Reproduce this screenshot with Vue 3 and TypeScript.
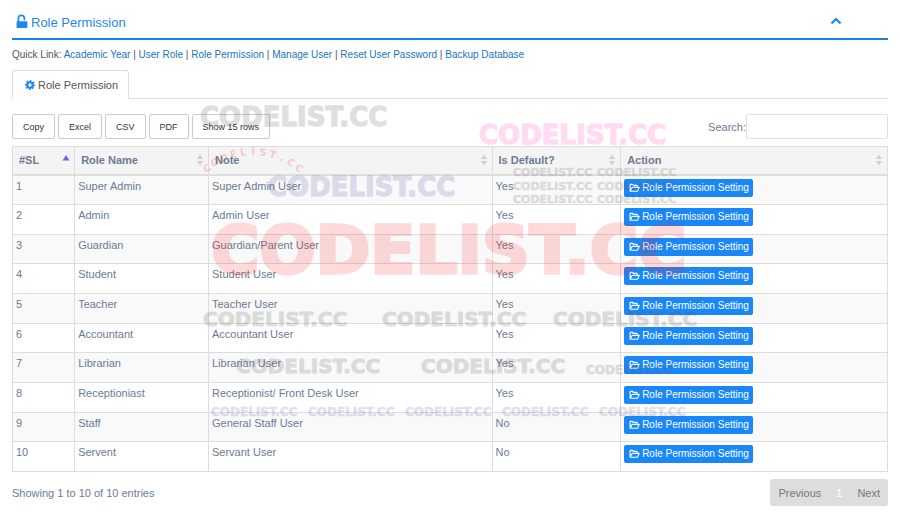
<script setup lang="ts">
import { ref } from 'vue'

interface Role {
  name: string
  note: string
  isDefault: boolean
}

interface Mark {
  x: number
  y: number
  size: number
  tone: string
}

const quickLinks: string[] = [
  'Academic Year',
  'User Role',
  'Role Permission',
  'Manage User',
  'Reset User Password',
  'Backup Database',
]

const exportButtons: string[] = ['Copy', 'Excel', 'CSV', 'PDF', 'Show 15 rows']

const columns: string[] = ['#SL', 'Role Name', 'Note', 'Is Default?', 'Action']

const roles: Role[] = [
  { name: 'Super Admin', note: 'Super Admin User', isDefault: true },
  { name: 'Admin', note: 'Admin User', isDefault: true },
  { name: 'Guardian', note: 'Guardian/Parent User', isDefault: true },
  { name: 'Student', note: 'Student User', isDefault: true },
  { name: 'Teacher', note: 'Teacher User', isDefault: true },
  { name: 'Accountant', note: 'Accountant User', isDefault: true },
  { name: 'Librarian', note: 'Librarian User', isDefault: true },
  { name: 'Receptioniast', note: 'Receptionist/ Front Desk User', isDefault: true },
  { name: 'Staff', note: 'General Staff User', isDefault: false },
  { name: 'Servent', note: 'Servant User', isDefault: false },
]

const search = ref('')

const brand = 'CODELIST.CC'

const marks: Mark[] = [
  { x: 200, y: 126, size: 26, tone: 'grey' },
  { x: 479, y: 144, size: 26, tone: 'pink' },
  { x: 268, y: 196, size: 26, tone: 'violet' },
  { x: 211, y: 273, size: 66, tone: 'red' },
  { x: 203, y: 326, size: 20, tone: 'grey' },
  { x: 382, y: 326, size: 20, tone: 'grey' },
  { x: 553, y: 326, size: 20, tone: 'grey' },
  { x: 236, y: 373, size: 20, tone: 'grey' },
  { x: 421, y: 373, size: 20, tone: 'grey' },
  { x: 586, y: 374, size: 12, tone: 'grey' },
  { x: 211, y: 416, size: 12, tone: 'violet' },
  { x: 308, y: 416, size: 12, tone: 'violet' },
  { x: 405, y: 416, size: 12, tone: 'violet' },
  { x: 502, y: 416, size: 12, tone: 'violet' },
  { x: 599, y: 416, size: 12, tone: 'violet' },
  { x: 513, y: 176, size: 11, tone: 'grey' },
  { x: 597, y: 176, size: 11, tone: 'grey' },
  { x: 513, y: 190, size: 11, tone: 'grey' },
  { x: 597, y: 190, size: 11, tone: 'grey' },
  { x: 513, y: 203, size: 11, tone: 'grey' },
  { x: 597, y: 203, size: 11, tone: 'grey' },
]

// Letters of the curved mark, fanned out around a common centre.
const arc = brand.split('').map((letter, i) => ({ letter, angle: -40 + i * 8 }))
</script>

<template>
  <main class="page">
    <header class="title-bar">
      <h1 class="title">
        <svg class="icon-lock" viewBox="0 0 12 15" aria-hidden="true">
          <path d="M2.4 8V4.4a3 3 0 0 1 6 0v1.2" fill="none" stroke="currentColor" stroke-width="1.7" stroke-linecap="round" />
          <rect x="0.6" y="7.2" width="10.8" height="6.8" rx="0.8" fill="currentColor" />
        </svg>
        Role Permission
      </h1>
      <button class="collapse" type="button" aria-label="Collapse panel">
        <svg viewBox="0 0 12 8" aria-hidden="true">
          <path d="M1.5 6.5 6 2l4.5 4.5" fill="none" stroke="currentColor" stroke-width="2.2" />
        </svg>
      </button>
    </header>

    <nav class="quick" aria-label="Quick links">
      Quick Link:
      <template v-for="(link, i) in quickLinks" :key="link">
        <template v-if="i > 0"> | </template><a href="#">{{ link }}</a>
      </template>
    </nav>

    <nav class="tabs" aria-label="Sections">
      <a class="tab" href="#">
        <svg class="icon-gear" viewBox="0 0 12 12" aria-hidden="true">
          <circle cx="6" cy="6" r="3.3" fill="none" stroke="currentColor" stroke-width="2.6" />
          <circle cx="6" cy="6" r="5" fill="none" stroke="currentColor" stroke-width="2" stroke-dasharray="2.1 1.827" stroke-dashoffset="1.05" />
        </svg>
        Role Permission
      </a>
    </nav>

    <div class="toolbar">
      <div class="exports">
        <button v-for="label in exportButtons" :key="label" class="export" type="button">{{ label }}</button>
      </div>
      <div class="search">
        <label for="role-search">Search:</label>
        <input id="role-search" v-model="search" type="search" />
      </div>
    </div>

    <table class="roles">
      <colgroup>
        <col class="col-sl" />
        <col class="col-name" />
        <col class="col-note" />
        <col class="col-default" />
        <col class="col-action" />
      </colgroup>
      <thead>
        <tr>
          <th v-for="(column, i) in columns" :key="column" scope="col">
            <div class="head">
              <span>{{ column }}</span>
              <svg v-if="i === 0" class="sorted" viewBox="0 0 8 12" aria-hidden="true">
                <path d="M0.5 6.5 4 1l3.5 5.5z" fill="currentColor" />
              </svg>
              <svg v-else class="sort" viewBox="0 0 8 12" aria-hidden="true">
                <path d="M1 5 4 0.5 7 5zM1 7l3 4.5L7 7z" fill="currentColor" />
              </svg>
            </div>
          </th>
        </tr>
      </thead>
      <tbody>
        <tr v-for="(role, i) in roles" :key="role.name">
          <td>{{ i + 1 }}</td>
          <td>{{ role.name }}</td>
          <td>{{ role.note }}</td>
          <td>{{ role.isDefault ? 'Yes' : 'No' }}</td>
          <td>
            <a class="setting" href="#">
              <svg viewBox="0 0 12 10" aria-hidden="true">
                <path d="M1.2 8.4V1.6q0-.6.6-.6h2.1q.5 0 .5.6v.5h3.9q.6 0 .6.6v1.5M1.2 8.4l2-3.6q.3-.5.8-.5h7.2L9.5 8q-.3.6-.9.6H1.6z" fill="none" stroke="currentColor" stroke-width="1.2" stroke-linejoin="round" />
              </svg>
              Role Permission Setting
            </a>
          </td>
        </tr>
      </tbody>
    </table>

    <footer class="footer">
      <p class="info">Showing 1 to 10 of 10 entries</p>
      <nav class="pager" aria-label="Pagination">
        <button type="button">Previous</button>
        <button class="current" type="button">1</button>
        <button type="button">Next</button>
      </nav>
    </footer>

    <svg class="marks" width="900" height="519" viewBox="0 0 900 519" aria-hidden="true">
      <text v-for="(mark, i) in marks" :key="i" :class="['mark', mark.tone]" :x="mark.x" :y="mark.y" :font-size="mark.size">{{ brand }}</text>
      <g class="arc" font-size="10" text-anchor="middle">
        <text v-for="(item, i) in arc" :key="i" x="253" y="155" :transform="`rotate(${item.angle} 253 223)`">{{ item.letter }}</text>
      </g>
    </svg>
  </main>
</template>

<style>
body {
  background: #fff;
}
</style>

<style scoped>
.page {
  position: relative;
  box-sizing: border-box;
  padding: 10px 12px 12px;
  color: #6b7b93;
  font-family: "Liberation Sans", Arial, sans-serif;
  font-size: 11px;
  line-height: 14px;
}

a {
  color: #1a75bb;
  text-decoration: none;
}

button {
  font-family: inherit;
  cursor: pointer;
}

.title-bar {
  display: flex;
  align-items: center;
  justify-content: space-between;
  height: 28px;
  padding: 0 46px 0 4px;
  border-bottom: 2px solid #1a82e2;
}

.title {
  display: flex;
  align-items: center;
  gap: 3px;
  margin: 0;
  padding-bottom: 2px;
  color: #1e88ee;
  font-size: 13px;
  font-weight: 400;
  line-height: 16px;
}

.icon-lock {
  width: 12px;
  height: 15px;
  padding-bottom: 4px;
}

.collapse {
  display: flex;
  padding: 0 0 6px;
  border: 0;
  background: none;
  color: #1e88ee;
}

.collapse svg {
  width: 12px;
  height: 8px;
}

.quick {
  margin-top: 8px;
  color: #555;
  font-size: 10px;
}

.tabs {
  display: flex;
  margin-top: 8px;
  border-bottom: 1px solid #ddd;
}

.tab {
  display: flex;
  align-items: center;
  gap: 3px;
  height: 27px;
  margin-bottom: -1px;
  padding: 0 10px 0 12px;
  border: 1px solid #ddd;
  border-bottom-color: #fff;
  border-radius: 3px 3px 0 0;
  background: #fff;
  color: #555;
}

.icon-gear {
  width: 10px;
  height: 10px;
  color: #1e88ee;
}

.toolbar {
  display: flex;
  align-items: center;
  justify-content: space-between;
  margin-top: 15px;
}

.exports {
  display: flex;
  gap: 3px;
}

.export {
  height: 25px;
  padding: 0 10px;
  border: 1px solid #ccc;
  border-radius: 2px;
  background: #fff;
  color: #333;
  font-size: 9px;
}

.search {
  display: flex;
  align-items: center;
}

.search input {
  box-sizing: border-box;
  width: 142px;
  height: 25px;
  padding: 0 6px;
  border: 1px solid #dde2e8;
  border-radius: 2px;
  background: #fff;
  color: inherit;
  font: inherit;
}

.roles {
  width: 100%;
  margin-top: 7px;
  border-collapse: collapse;
  table-layout: fixed;
}

.col-sl {
  width: 7.1%;
}

.col-name {
  width: 15.3%;
}

.col-note {
  width: 32.4%;
}

.col-default {
  width: 14.7%;
}

.col-action {
  width: 30.5%;
}

th,
td {
  box-sizing: border-box;
  border: 1px solid #ddd;
  text-align: left;
}

th {
  height: 28px;
  padding: 0 4px 0 6px;
  border-bottom-width: 2px;
  background: #f4f4f4;
  font-weight: 700;
}

.head {
  display: flex;
  align-items: center;
  justify-content: space-between;
}

.head svg {
  width: 8px;
  height: 12px;
}

.sorted {
  color: #6a6ae0;
}

.sort {
  color: #d0d0d0;
}

td {
  height: 30px;
  padding: 3px 3px 0;
  vertical-align: top;
}

tbody tr:nth-child(3n) td {
  height: 29px;
}

tbody tr:nth-child(odd) {
  background: #f9f9f9;
}

.setting {
  display: inline-flex;
  align-items: center;
  gap: 2px;
  height: 18px;
  padding: 0 4px 0 5px;
  border-radius: 2px;
  background: #1a87f7;
  color: #fff;
  font-size: 10px;
}

.setting svg {
  width: 11px;
  height: 10px;
}

.footer {
  display: flex;
  align-items: flex-start;
  justify-content: space-between;
  margin-top: 7px;
}

.info {
  margin: 7px 0 0;
}

.pager {
  display: flex;
  border-radius: 3px;
  background: #ddd;
}

.pager button {
  height: 27px;
  padding: 0 8px;
  border: 0;
  background: none;
  color: #777;
  font-size: 11px;
}

.pager .current {
  padding: 0 7px;
  color: #fff;
}

.marks {
  position: absolute;
  top: 0;
  left: 0;
  font-family: "DejaVu Sans", sans-serif;
  font-weight: 700;
  pointer-events: none;
}

.mark {
  fill: currentColor;
  stroke: currentColor;
  stroke-width: 0.05em;
}

.grey {
  color: #5a5a5a;
  opacity: 0.19;
}

.pink {
  color: #ff3cbe;
  opacity: 0.18;
}

.violet {
  color: #5046a0;
  opacity: 0.17;
}

.red {
  color: #ff1e1e;
  opacity: 0.16;
}

.arc {
  fill: rgba(240, 50, 50, 0.24);
}
</style>
